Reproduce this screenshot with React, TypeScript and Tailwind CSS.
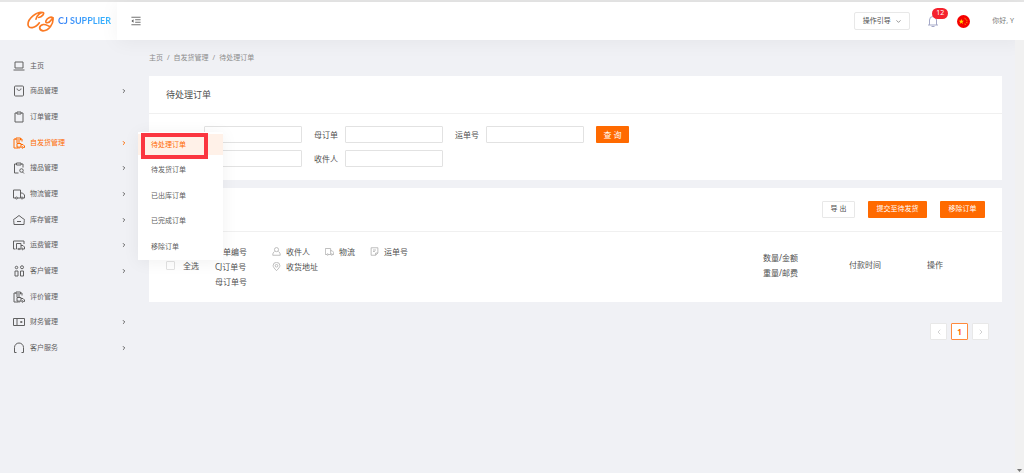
import type { ReactNode } from "react";
import { ChevronDown, ChevronLeft, ChevronRight } from "lucide-react";

const clipboard = (
  <>
    <path d="M8 4H4v18h16V4h-4" />
    <path d="M8 2h8v4H8z" />
  </>
);

const clipboardTruck = (
  <>
    <path d="M6 4H2v18h8M15 4h3v5" />
    <path d="M6 2h9v4H6zM6 10h8" />
    <path d="M10 20h-2v-7h8v7h-2M16 15h4l3 3v3h-2" />
    <circle cx="12" cy="21" r="1.5" />
    <circle cx="19" cy="21" r="1.5" />
  </>
);

const truck = (
  <>
    <path d="M5 20H1V4h14v16H9M15 10h4l4 4v6h-3" />
    <circle cx="7" cy="20" r="2" />
    <circle cx="18" cy="20" r="2" />
  </>
);

const menu: { label: string; icon: ReactNode; arrow?: boolean; active?: boolean }[] = [
  { label: "主页", icon: <path d="M4 4h16v12H4zM1 20h22" /> },
  {
    label: "商品管理",
    arrow: true,
    icon: (
      <>
        <rect x="3" y="2" width="18" height="20" rx="2" />
        <path d="M8 7c0 5 8 5 8 0" />
      </>
    ),
  },
  { label: "订单管理", icon: clipboard },
  { label: "自发货管理", icon: clipboardTruck, arrow: true, active: true },
  {
    label: "搜品管理",
    arrow: true,
    icon: (
      <>
        <path d="M7 4H3v18h8M16 4h4v7M7 2h9v4H7z" />
        <circle cx="17" cy="17" r="3.5" />
        <path d="M19 20l3 3" />
      </>
    ),
  },
  { label: "物流管理", icon: truck, arrow: true },
  { label: "库存管理", icon: <path d="M3 10l9-7 9 7M3 9c-3 1-1 5-1 12h20c0-7 2-11-1-12M8 15h8" />, arrow: true },
  {
    label: "运费管理",
    arrow: true,
    icon: (
      <>
        <path d="M5 20H1V4h21v6" />
        <path d="M9 20H7V9h9v11h-2M16 13h4l3 3v4h-2" />
        <circle cx="12" cy="20" r="1.5" />
        <circle cx="19" cy="20" r="1.5" />
      </>
    ),
  },
  {
    label: "客户管理",
    arrow: true,
    icon: (
      <>
        <circle cx="7" cy="5" r="2.5" />
        <circle cx="18" cy="4.500" r="3" />
        <path d="M4 12h6v10H4zM15 12h6v10h-6z" />
      </>
    ),
  },
  { label: "评价管理", icon: clipboardTruck },
  { label: "财务管理", icon: <path d="M1 5h22v14H1zM8 5v14M14 12h5M16.5 10v4" />, arrow: true },
  { label: "客户服务", icon: <path d="M7 21H3v-6M17 21h4v-6M3 16v-5a9 9 0 0 1 18 0v5" />, arrow: true },
];

const submenu = ["待处理订单", "待发货订单", "已出库订单", "已完成订单", "移除订单"];

function Icon({ children, className }: { children: ReactNode; className: string }) {
  return (
    <svg viewBox="0 0 24 24" fill="none" stroke="currentColor" strokeWidth="2" strokeLinejoin="round" className={className}>
      {children}
    </svg>
  );
}

function Field({ label, name }: { label?: string; name: string }) {
  return (
    <label className="flex items-center">
      <span className="w-[31px] text-[8px] whitespace-nowrap">{label}</span>
      <input
        type="text"
        name={name}
        aria-label={name}
        className="h-[17px] w-[98px] rounded-[1px] border border-[#e2e2e2] bg-white px-1 text-[8px] outline-none"
      />
    </label>
  );
}

function Tag({ label, children }: { label: string; children: ReactNode }) {
  return (
    <span className="flex items-center gap-[5px]">
      <svg viewBox="0 0 24 24" fill="none" stroke="#aaa" strokeWidth="2" className="h-[9px] w-[9px]">
        {children}
      </svg>
      {label}
    </span>
  );
}

function Logo() {
  return (
    <svg viewBox="0 0 81 62" fill="none" stroke="#fb7a24" strokeWidth="5" strokeLinecap="round" className="h-[21px] w-[27px]">
      <path d="M27 24C29 13 40 3 48 4C54 6 45 18 35 19M48 4C30 -1 3 22 3 39C3 56 26 51 37 35" />
      <path d="M78 20C71 15 60 21 57 29C54 38 66 36 72 27C75 23 77 20 78 20C80 38 66 59 48 59C34 56 35 43 49 40C58 39 63 45 69 46" />
    </svg>
  );
}

function Submenu() {
  return (
    <ul className="absolute top-[2px] left-full z-10 grid h-[128px] w-[85px] auto-rows-fr bg-white shadow-[0_2px_16px_rgba(0,0,0,0.06)]">
      {submenu.map((label, i) => (
        <li key={label} className="relative flex items-center">
          <a
            href="#"
            className={
              i === 0
                ? "flex h-[21px] w-full items-center bg-[#fff1e8] pl-[13px] text-[#ff6a00]"
                : "flex h-[21px] w-full items-center pl-[13px]"
            }
          >
            {label}
          </a>
          {i === 0 && <div className="pointer-events-none absolute top-[1px] left-[3px] h-[26px] w-[67px] border-[4px] border-[#fb3640]" />}
        </li>
      ))}
    </ul>
  );
}

function Sidebar() {
  return (
    <nav className="w-[138px] shrink-0 pt-[13px] text-[7px] text-[#606060]">
      <ul className="grid h-[308px] auto-rows-fr">
        {menu.map((item) => (
          <li key={item.label} className="relative flex">
            <a
              href="#"
              className={
                item.active
                  ? "flex flex-1 items-center pr-[11px] pl-[13px] text-[#ff6a00]"
                  : "flex flex-1 items-center pr-[11px] pl-[13px]"
              }
            >
              <Icon className="mr-[5px] h-3 w-3">{item.icon}</Icon>
              <span className="flex-1">{item.label}</span>
              {item.arrow && <ChevronRight className="h-[6px] w-[6px]" strokeWidth={4} />}
            </a>
            {item.active && <Submenu />}
          </li>
        ))}
      </ul>
    </nav>
  );
}

function OrderTable() {
  return (
    <table className="w-full table-fixed text-left text-[8px] leading-[15px]">
      <thead>
        <tr className="h-[70px]">
          <th className="w-[66px] pb-[4px] pl-[17px] font-normal">
            <label className="flex items-center gap-[8px]">
              <input type="checkbox" className="h-[9px] w-[9px] appearance-none rounded-[1px] border border-[#e2e2e2] bg-white" />
              全选
            </label>
          </th>
          <th className="w-[57px] pt-[12px] align-top font-normal">
            <div>订单编号</div>
            <div>CJ订单号</div>
            <div>母订单号</div>
          </th>
          <th className="pt-[12px] align-top font-normal">
            <div className="flex gap-[15px]">
              <Tag label="收件人">
                <circle cx="12" cy="7" r="5.500" />
                <path d="M7 12c-4 2-5 6-5 10h20c0-4-1-8-5-10" />
              </Tag>
              <Tag label="物流">{truck}</Tag>
              <Tag label="运单号">
                <path d="M3 2h18v14l-6 6H3zM21 16h-6v6M8 8h8M8 12h5" />
              </Tag>
            </div>
            <Tag label="收货地址">
              <path d="M12 23C6 17 3 13 3 9.500a9 8.500 0 0 1 18 0C21 13 18 17 12 23z" />
              <circle cx="12" cy="10" r="3.500" />
            </Tag>
          </th>
          <th className="w-[86px] pb-[5px] font-normal">
            <div>数量/金额</div>
            <div>重量/邮费</div>
          </th>
          <th className="w-[78px] pb-[5px] font-normal">付款时间</th>
          <th className="w-[75px] pb-[5px] font-normal">操作</th>
        </tr>
      </thead>
    </table>
  );
}

export default function App() {
  return (
    <div className="flex min-h-screen flex-col bg-[#f0f1f5] font-['Noto_Sans','Noto_Sans_CJK_SC',sans-serif] text-[#505050]">
      <header className="flex h-10 border-t-2 border-[#e6e6e6] bg-white">
        <div className="flex w-[117px] items-center gap-[4px] pl-[27px]">
          <Logo />
          <span className="bg-gradient-to-r from-[#3b82f6] to-[#38b6ff] bg-clip-text font-['Lato',sans-serif] text-[9px] font-bold whitespace-nowrap text-transparent">
            CJ SUPPLIER
          </span>
        </div>
        <div className="flex flex-1 items-center pr-[10px] pl-[14px] shadow-[0_2px_20px_rgba(0,0,0,0.05)]">
          <button aria-label="menu" className="text-[#555]">
            <Icon className="h-[10px] w-[10px]">
              <path d="M1 3h22M10 9h13M10 15h13M1 21h22" />
              <path d="M6 8v8l-5-4z" fill="currentColor" stroke="none" />
            </Icon>
          </button>
          <button className="ml-auto flex h-[18px] w-[56px] items-center justify-center gap-[4px] rounded-[2px] border border-[#e8e8e8] text-[7px]">
            操作引导
            <ChevronDown className="h-[7px] w-[7px]" />
          </button>
          <button aria-label="notifications" className="relative ml-[17px] text-[#a5a9c8]">
            <Icon className="h-3 w-3">
              <path d="M2 20h20M5 20V10a7 7 0 0 1 14 0v10M12 1v2M9 23h6" />
            </Icon>
            <span className="absolute -top-[7px] left-[5px] flex h-[11px] w-[16px] items-center justify-center rounded-full bg-[#f5222d] text-[7px] text-white">
              12
            </span>
          </button>
          <svg viewBox="0 0 39 39" className="ml-[18px] h-[13px] w-[13px]">
            <circle cx="19.500" cy="19.500" r="19.500" fill="#f50000" />
            <path d="M13 12l2 5h6l-5 4 2 6-5-4-5 4 2-6-5-4h6z" fill="#ffde00" />
            <path d="M23 10l3 2M28 15l3 2M28 22l3 1M23 27l3 1" stroke="#ffde00" strokeWidth="2.500" />
          </svg>
          <span className="ml-[22px] text-[7px] text-[#777]">你好, Y</span>
        </div>
      </header>

      <div className="flex flex-1">
        <Sidebar />
        <main className="min-w-0 flex-1 pr-[13px] pl-[11px]">
          <div className="flex h-9 items-center gap-[4px] text-[7px] text-[#8c8c8c]">
            <a href="#">主页</a>
            <span>/</span>
            <a href="#">自发货管理</a>
            <span>/</span>
            <a href="#">待处理订单</a>
          </div>

          <section className="bg-white">
            <h1 className="flex h-[38px] items-center border-b border-[#f0f0f0] px-[17px] text-[9px]">待处理订单</h1>
            <div className="flex items-start gap-[12px] px-[17px] pt-[12px] pb-[13px]">
              <div className="grid grid-cols-[repeat(3,auto)] gap-x-[12px] gap-y-[7px] pl-[7px]">
                <Field name="order" />
                <Field label="母订单" name="parent" />
                <Field label="运单号" name="tracking" />
                <Field name="sku" />
                <Field label="收件人" name="recipient" />
              </div>
              <button className="h-[17px] w-[33px] rounded-[1px] bg-[#ff6a00] text-[8px] text-white">查 询</button>
            </div>
          </section>

          <section className="mt-2 bg-white">
            <div className="flex h-[44px] items-center justify-end gap-[13px] border-b border-[#f0f0f0] px-[17px] text-[7px]">
              <button className="h-[17px] w-[33px] rounded-[1px] border border-[#e8e8e8]">导 出</button>
              <button className="h-[17px] w-[59px] rounded-[1px] bg-[#ff6a00] text-white">提交至待发货</button>
              <button className="h-[17px] w-[45px] rounded-[1px] bg-[#ff6a00] text-white">移除订单</button>
            </div>
            <OrderTable />
          </section>

          <div className="mt-[21px] flex justify-end gap-[4px] pr-[13px] text-[8px]">
            <button aria-label="previous" className="flex h-[17px] w-[17px] items-center justify-center rounded-[1px] border border-[#e8e8e8] bg-white text-[#bbb]">
              <ChevronLeft className="h-2 w-2" />
            </button>
            <button className="flex h-[17px] w-[17px] items-center justify-center rounded-[1px] border border-[#ff8a3c] bg-white font-bold text-[#ff6a00]">1</button>
            <button aria-label="next" className="flex h-[17px] w-[17px] items-center justify-center rounded-[1px] border border-[#e8e8e8] bg-white text-[#bbb]">
              <ChevronRight className="h-2 w-2" />
            </button>
          </div>
        </main>
        <div className="flex w-[9px] items-end justify-center bg-[#f1f1f1] pb-[1px]">
          <svg viewBox="0 0 10 6" className="h-[3px] w-[5px]">
            <path d="M0 0h10L5 6z" fill="#777" />
          </svg>
        </div>
      </div>
    </div>
  );
}
